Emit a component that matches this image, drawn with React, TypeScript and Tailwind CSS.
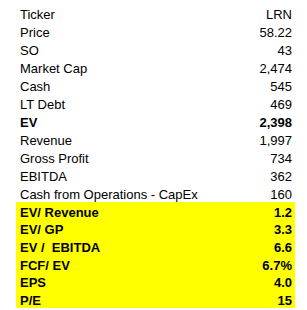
import React from 'react';

type Row = { label: string; value: string; bold?: boolean };

const plain: Row[] = [
  { label: 'Ticker', value: 'LRN' },
  { label: 'Price', value: '58.22' },
  { label: 'SO', value: '43' },
  { label: 'Market Cap', value: '2,474' },
  { label: 'Cash', value: '545' },
  { label: 'LT Debt', value: '469' },
  { label: 'EV', value: '2,398', bold: true },
  { label: 'Revenue', value: '1,997' },
  { label: 'Gross Profit', value: '734' },
  { label: 'EBITDA', value: '362' },
  { label: 'Cash from Operations - CapEx', value: '160' },
];

const ratios: Row[] = [
  { label: 'EV/ Revenue', value: '1.2' },
  { label: 'EV/ GP', value: '3.3' },
  { label: 'EV /  EBITDA', value: '6.6' },
  { label: 'FCF/ EV', value: '6.7%' },
  { label: 'EPS', value: '4.0' },
  { label: 'P/E', value: '15' },
];

const App: React.FC = () => {
  return (
    <div className="w-[307px] h-[310px] bg-white overflow-hidden pt-1 text-[13px] text-black font-['Liberation_Sans',Arial,sans-serif]">
      <div className="ml-4 w-[279px]">
        {plain.map((r) => (
          <div
            key={r.label}
            className={`flex items-end justify-between h-[18px] leading-[14px] pl-1 pr-[3px] whitespace-pre ${r.bold ? 'font-bold' : ''}`}
          >
            <span>{r.label}</span>
            <span>{r.value}</span>
          </div>
        ))}
        <div className="bg-[#ffff00]">
          {ratios.map((r) => (
            <div
              key={r.label}
              className="flex items-end justify-between h-[17.67px] leading-[14px] pl-1 pr-[3px] font-bold whitespace-pre"
            >
              <span>{r.label}</span>
              <span>{r.value}</span>
            </div>
          ))}
        </div>
      </div>
    </div>
  );
};

export default App;
